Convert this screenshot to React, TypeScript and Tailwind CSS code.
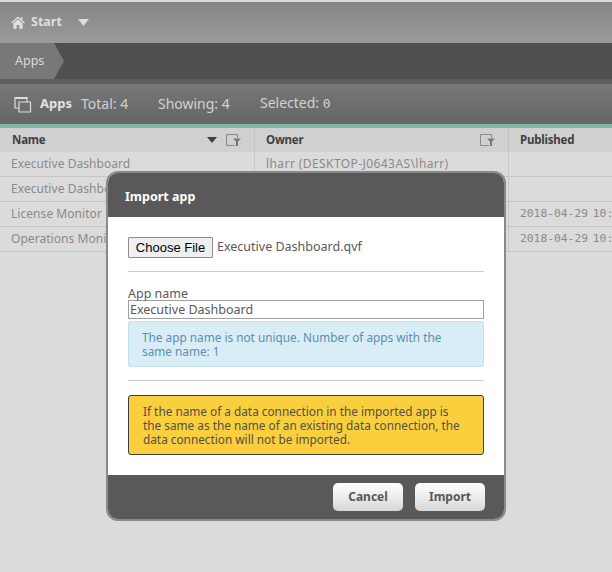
import React from "react";

const sans = "font-['Noto_Sans','Open_Sans',sans-serif]";

function FilterIcon() {
  return (
    <svg width="15" height="12" viewBox="0 0 15 12" className="block">
      <path d="M9 11.5H.5V.5h11V4" fill="none" stroke="#8a8a8a" strokeWidth="1" />
      <path d="M7 4.5h8l-3 3V12h-2V7.5z" fill="#777" />
    </svg>
  );
}

function Row({ name, owner, date }: { name: string; owner?: string; date?: string }) {
  return (
    <div className="flex h-[25px] border-b border-[#c4c4c4] text-[12px] leading-[23px] text-[#8a8a8a] tracking-[0.05px]">
      <div className="w-[255px] shrink-0 truncate border-r border-[#c9c9c9] pl-[11px]">{name}</div>
      <div className="w-[254px] shrink-0 truncate border-r border-[#c9c9c9] pl-[11px] tracking-[0.42px]">{owner}</div>
      <div className="flex-1 overflow-hidden whitespace-nowrap pl-[11px] font-['DejaVu_Sans_Mono',monospace] text-[11.3px] tracking-normal [word-spacing:-2px]">{date}</div>
    </div>
  );
}

export default function App() {
  return (
    <div className={`relative h-[572px] w-[612px] overflow-hidden bg-[#dbdbdb] ${sans}`}>
      <div className="h-[2px] bg-[#dcdcdc]" />
      <div className="flex h-[41px] items-center bg-gradient-to-b from-[#868686] to-[#9a9a9a] pb-[1px] pl-[11px] text-[#dedede]">
        <svg width="14" height="13" viewBox="0 0 14 13" className="block">
          <path d="M7 0.5 0.2 6.6l.8.9L7 2.2l6 5.3.8-.9L11.4 4.5V1.2H9.8v1.9z" fill="#e0e0e0" />
          <path d="M2.4 7.6 7 3.5l4.6 4.1V12.8H8.4V9H5.6v3.8H2.4z" fill="#e0e0e0" />
        </svg>
        <span className="ml-[6px] text-[12.5px] font-bold">Start</span>
        <svg width="11" height="7" viewBox="0 0 11 7" className="ml-[16px] block">
          <path d="M0 0h11L5.5 7z" fill="#dedede" />
        </svg>
      </div>
      <div className="flex h-[36px] bg-[#505050]">
        <div className="relative flex h-full w-[54px] items-center bg-[#787878] pl-[15px] text-[12.5px] text-[#dadada]">
          Apps
          <svg width="10" height="36" viewBox="0 0 10 36" className="absolute left-[54px] top-0 block">
            <path d="M0 0l10 18L0 36z" fill="#787878" />
          </svg>
        </div>
      </div>
      <div className="h-[5px] bg-[#5f5f5f]" />
      <div className="flex h-[40px] items-center bg-gradient-to-b from-[#777777] to-[#666666] pl-[14px] text-[14px] text-[#d2d2d2]">
        <svg width="18" height="17" viewBox="0 0 18 17" className="block">
          <path d="M1 1.5h12V12H1z" fill="none" stroke="#dcdcdc" strokeWidth="1.2" />
          <path d="M1 2h12" stroke="#dcdcdc" strokeWidth="2" />
          <path d="M5 6h11.5v10H5z" fill="#6e6e6e" stroke="#dcdcdc" strokeWidth="1.2" />
        </svg>
        <span className="ml-[8px] text-[13px] font-bold text-[#e2e2e2]">Apps</span>
        <span className="ml-[9px] w-[77px] shrink-0 pb-[2px]">Total: 4</span>
        <span className="w-[102px] shrink-0 pb-[2px]">Showing: 4</span>
        <span className="pb-[2px]">Selected: <span className="font-['DejaVu_Sans_Mono',monospace] text-[13px]">0</span></span>
      </div>
      <div className="h-[4px] bg-[#7fb6a0]" />
      <div className="flex h-[24px] bg-[#d0d0d0] text-[11.5px] font-bold leading-[24px] tracking-[-0.2px] text-[#404040]">
        <div className="flex w-[255px] shrink-0 items-center justify-between border-r border-[#c2c2c2] pl-3 pr-[13px]">
          <span>Name</span>
          <span className="flex items-center gap-[9px]">
            <svg width="10" height="6" viewBox="0 0 10 6" className="block"><path d="M0 0h10L5 6z" fill="#404040" /></svg>
            <FilterIcon />
          </span>
        </div>
        <div className="flex w-[254px] shrink-0 items-center justify-between border-r border-[#c2c2c2] pl-[11px] pr-[13px]">
          <span>Owner</span>
          <FilterIcon />
        </div>
        <div className="flex-1 pl-[11px]">Published</div>
      </div>
      <Row name="Executive Dashboard" owner="lharr (DESKTOP-J0643AS\lharr)" />
      <Row name="Executive Dashboard" />
      <Row name="License Monitor" date="2018-04-29 10:16:22" />
      <Row name="Operations Monitor" date="2018-04-29 10:16:22" />

      <div className="absolute left-[106px] top-[171px] w-[400px] overflow-hidden rounded-[12px] border-2 border-[#8a8a8a]">
        <div className="flex h-[44px] items-center bg-[#595959] pl-[17px] pt-[4px] text-[12.5px] font-bold text-white">Import app</div>
        <div className="h-[258px] bg-white px-[20px] pt-[20px]">
          <div className="flex h-[21px] items-center font-['Liberation_Sans',sans-serif] text-[13px]">
            <div className="flex h-[21px] w-[85px] items-center justify-center rounded-[1px] border border-[#8e8e8e] bg-[#efefef] text-black">Choose File</div>
            <span className={`ml-[4px] text-[12.5px] text-[#595959] ${sans}`}>Executive Dashboard.qvf</span>
          </div>
          <div className="mt-[13px] h-px bg-[#cccccc]" />
          <div className="mt-[14px] h-[14px] text-[12.5px] leading-[16px] text-[#595959]">App name</div>
          <div className="h-[19px] border border-[#a0a0a0] pl-[1px] text-[12.5px] leading-[18px] text-[#595959]">Executive Dashboard</div>
          <div className="mt-[2px] h-[46px] rounded-[2px] border border-[#bfe3f1] bg-[#d9edf7] pl-[13px] pr-[10px] pt-[8px] text-[11.8px] leading-[14px] text-[#5c8fae]">
            The app name is not unique. Number of apps with the same name: 1
          </div>
          <div className="mt-[13px] h-px bg-[#cccccc]" />
          <div className="mt-[14px] h-[60px] rounded-[3px] border border-[#3f3f3f] bg-[#f9cf3d] pl-[14px] pr-[20px] pt-[8px] text-[11.8px] leading-[14px] text-[#555048]">
            If the name of a data connection in the imported app is the same as the name of an existing data connection, the data connection will not be imported.
          </div>
        </div>
        <div className="flex h-[44px] items-center justify-end gap-[12px] bg-[#595959] pr-[19px]">
          <div className="flex h-[28px] w-[70px] items-center justify-center rounded-[5px] bg-gradient-to-b from-[#ffffff] to-[#d8d8d8] text-[12px] font-bold text-[#595959]">Cancel</div>
          <div className="flex h-[28px] w-[70px] items-center justify-center rounded-[5px] bg-gradient-to-b from-[#ffffff] to-[#d8d8d8] text-[12px] font-bold text-[#595959]">Import</div>
        </div>
      </div>
    </div>
  );
}
